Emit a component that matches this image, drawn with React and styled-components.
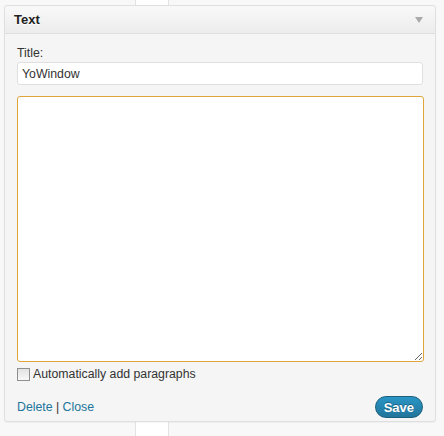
import React, { useState } from "react";
import styled, { createGlobalStyle } from "styled-components";

const GlobalStyle = createGlobalStyle`
  html, body {
    margin: 0;
    padding: 0;
    background: #fff;
  }
  body {
    font-family: "Liberation Sans", Arial, sans-serif;
    font-size: 12.3px;
    color: #333;
  }
`;

const Page = styled.div`
  width: 444px;
  height: 436px;
  box-sizing: border-box;
  padding: 5px 8px 0 4px;
  background: linear-gradient(
    to right,
    #f8f8f8 0 135px,
    #e2e2e2 135px 136px,
    #fff 136px 168px,
    #e2e2e2 168px 169px,
    #f8f8f8 169px
  );
`;

const Widget = styled.div`
  width: 432px;
  height: 417px;
  box-sizing: border-box;
  border: 1px solid #dfdfdf;
  border-radius: 3px;
  background: #f4f4f4;
  box-shadow: 0 1px 1px rgba(0, 0, 0, 0.04);
  display: flex;
  flex-direction: column;
`;

const Header = styled.div`
  height: 27px;
  display: flex;
  align-items: center;
  justify-content: space-between;
  padding: 0 9px;
  border-bottom: 1px solid #dfdfdf;
  border-radius: 3px 3px 0 0;
  background: linear-gradient(to bottom, #f9f9f9, #ececec);
`;

const HeaderTitle = styled.h3`
  margin: 0;
  font-size: 13px;
  font-weight: bold;
  color: #222;
  text-shadow: 0 1px 0 #fff;
`;

const Arrow = styled.span`
  width: 0;
  height: 0;
  margin-right: 3px;
  border-left: 4px solid transparent;
  border-right: 4px solid transparent;
  border-top: 6px solid #aaa;
`;

const Body = styled.div`
  flex: 1;
  display: flex;
  flex-direction: column;
  padding: 11px 12px 0;
  background: #f5f5f5;
  border-radius: 0 0 3px 3px;
`;

const Label = styled.label`
  display: block;
  color: #333;
  line-height: 16px;
  margin-bottom: 1px;
`;

const TitleInput = styled.input`
  width: 100%;
  height: 23px;
  box-sizing: border-box;
  margin: 0;
  padding: 2px 4px;
  border: 1px solid #dfdfdf;
  border-radius: 3px;
  background: #fff;
  font-family: inherit;
  font-size: 12.3px;
  color: #333;
  outline: none;
`;

const TextArea = styled.textarea`
  display: block;
  width: 407px;
  height: 266px;
  box-sizing: border-box;
  margin: 11px 0 0;
  padding: 3px;
  border: 1px solid #dfa53a;
  border-radius: 3px;
  background: #fff;
  font-family: inherit;
  font-size: 12px;
  outline: none;
  resize: both;
`;

const CheckRow = styled.label`
  display: flex;
  align-items: center;
  gap: 3px;
  margin-top: 5px;
  color: #333;
  line-height: 14px;
`;

const Box = styled.span`
  width: 11px;
  height: 11px;
  border: 1px solid #8f8f8f;
  background: linear-gradient(to bottom, #e2e2e2, #f8f8f8);
`;

const Footer = styled.div`
  display: flex;
  align-items: center;
  justify-content: space-between;
  margin-top: 15px;
`;

const Links = styled.div`
  color: #333;
`;

const Link = styled.a`
  color: #21759b;
  text-decoration: none;
  cursor: pointer;
`;

const SaveButton = styled.button`
  height: 22px;
  padding: 0 8px;
  margin-right: 0;
  border: 1px solid #1b607f;
  border-radius: 11px;
  background: linear-gradient(to bottom, #2a95c5, #21759b);
  color: #fff;
  font-family: inherit;
  font-size: 13px;
  font-weight: bold;
  text-shadow: 0 -1px 0 rgba(0, 0, 0, 0.3);
  cursor: pointer;
`;

export default function App() {
  const [title, setTitle] = useState("YoWindow");
  const [text, setText] = useState("");

  return (
    <>
      <GlobalStyle />
      <Page>
        <Widget>
          <Header>
            <HeaderTitle>Text</HeaderTitle>
            <Arrow />
          </Header>
          <Body>
            <Label htmlFor="widget-title">Title:</Label>
            <TitleInput
              id="widget-title"
              value={title}
              onChange={(e) => setTitle(e.target.value)}
            />
            <TextArea value={text} onChange={(e) => setText(e.target.value)} />
            <CheckRow>
              <Box />
              Automatically add paragraphs
            </CheckRow>
            <Footer>
              <Links>
                <Link>Delete</Link> | <Link>Close</Link>
              </Links>
              <SaveButton>Save</SaveButton>
            </Footer>
          </Body>
        </Widget>
      </Page>
    </>
  );
}
